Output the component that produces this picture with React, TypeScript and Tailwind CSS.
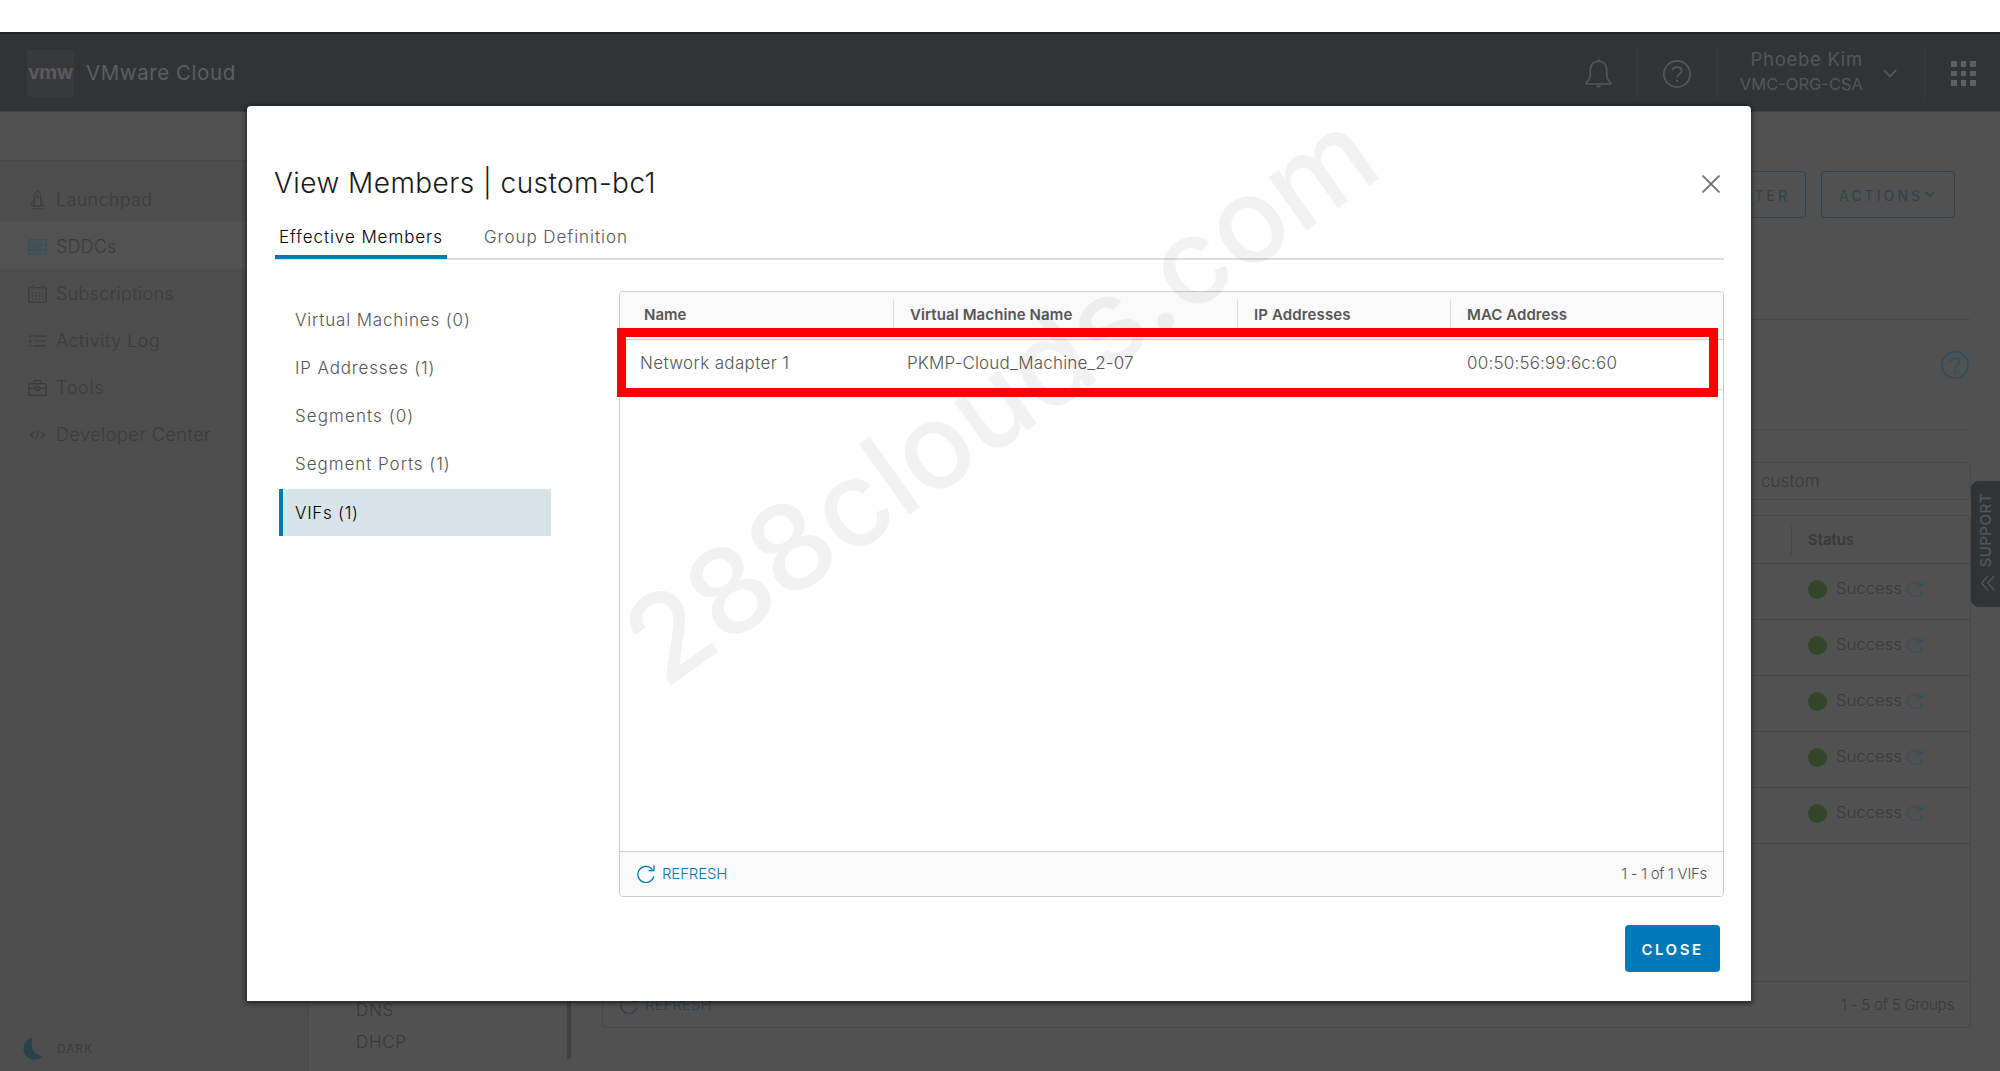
import React from 'react';

type IconProps = { className?: string };

const RefreshIcon = ({ className = '' }: IconProps) => (
  <svg className={className} viewBox="0 0 18 18" fill="none" stroke="currentColor" strokeWidth="1.3">
    <path d="M16.8 11.4A8.1 8.1 0 1 1 15.4 4.6" />
    <path d="M17 0.4V5.6H11.6" />
  </svg>
);

const HelpIcon = ({ className = '' }: IconProps) => (
  <svg className={className} viewBox="0 0 28 28" fill="none" stroke="currentColor" strokeWidth="1.7">
    <circle cx="14" cy="14" r="13.1" />
    <path d="M9.3 10.2C10.1 8.2 11.8 7.2 14 7.2c2.6 0 4.6 1.5 4.6 3.8 0 3.6-4.5 3-4.5 6.6" />
    <path d="M14.1 19.8v2" strokeWidth="1.9" />
  </svg>
);

const BellIcon = () => (
  <svg className="h-[29px] w-[27px]" viewBox="0 0 27 29" fill="none" stroke="currentColor" strokeWidth="1.6">
    <path d="M13.5 0.4v2" strokeWidth="2.2" />
    <path d="M13.5 2.2c-4.700 0-8.200 3.500-8.200 8.200v5.800c0 3-1 4.800-3.800 7.200-.8.800-.5 1.600.7 1.600h22.600c1.200 0 1.500-.8.7-1.600-2.800-2.400-3.800-4.200-3.800-7.200v-5.800c0-4.700-3.500-8.200-8.200-8.200z" />
    <path d="M11 26.400h5c-.3 1.400-1.200 2-2.500 2s-2.200-.6-2.500-2z" fill="currentColor" stroke="none" />
  </svg>
);

const RocketIcon = () => (
  <svg className="h-5 w-[19px]" viewBox="0 0 19 20" fill="none" stroke="currentColor" strokeWidth="1">
    <path d="M6.300 16V6.600C6.300 4 7.600 2 9.500.9c1.900 1.100 3.200 3.100 3.200 5.700V16zM6.300 10.200c-1.900 1.200-2.600 2.700-2.600 5.800h2.600M12.700 10.200c1.900 1.200 2.600 2.700 2.600 5.800h-2.600M3.700 18.800h11.600" />
    <circle cx="9.500" cy="6.500" r="1.200" />
  </svg>
);

const ServerIcon = () => (
  <svg className="h-4 w-[19px]" viewBox="0 0 19 16" fill="none" stroke="currentColor" strokeWidth="1.300">
    <rect x=".7" y=".7" width="17.600" height="14.600" rx="1" />
    <path d="M.7 5.500h17.600M.7 10.500h17.600M5.500 3.200h8M3 8h11M5.500 12.900h8" />
  </svg>
);

const CalendarIcon = () => (
  <svg className="h-[18px] w-[19px]" viewBox="0 0 19 18" fill="none" stroke="currentColor" strokeWidth="1.300">
    <path d="M3.500 2.600H2c-.8 0-1.300.5-1.300 1.300v12c0 .8.5 1.400 1.300 1.400h15c.8 0 1.300-.6 1.300-1.400v-12c0-.8-.5-1.300-1.300-1.300h-1.500M6.500 2.600h6M4.900.3v4M14.200.3v4" />
    <path d="M4 8.200h11.500M4 11h11.500M4 13.800h11.500" strokeDasharray="1.500 1.800" />
  </svg>
);

const ListIcon = () => (
  <svg className="h-3 w-[19px]" viewBox="0 0 19 12" fill="none" stroke="currentColor" strokeWidth="1.200">
    <path d="M5 1.200h13M5 6h13M5 10.800h13" />
    <path d="M1.200 1.200h2M1.200 6h2M1.200 10.800h2" strokeWidth="2" />
  </svg>
);

const ToolboxIcon = () => (
  <svg className="h-4 w-[19px]" viewBox="0 0 19 16" fill="none" stroke="currentColor" strokeWidth="1.300">
    <path d="M2 3.700h15l1.300 2v8.400c0 .7-.4 1.200-1.200 1.200H1.900c-.8 0-1.200-.5-1.200-1.200V5.700zM6 3.500V1.900C6 1.100 6.500.7 7.200.7h4.600c.7 0 1.200.4 1.200 1.200v1.600M.8 8.300h6.200M12 8.300h6.200" />
    <circle cx="9.500" cy="8.400" r="2" />
  </svg>
);

const CodeIcon = () => (
  <svg className="h-[10px] w-[19px]" viewBox="0 0 19 10" fill="none" stroke="currentColor" strokeWidth="1.200">
    <path d="M6.300 1.600 2.600 5l3.700 3.300M12.700 1.600 16.400 5l-3.700 3.300M10.800.5 8.200 9.500" />
  </svg>
);

const sideItems = [
  { label: 'Launchpad', icon: <RocketIcon />, cls: 'tracking-[0.3px]' },
  { label: 'SDDCs', icon: <ServerIcon />, cls: 'tracking-[0.15px]', active: true },
  { label: 'Subscriptions', icon: <CalendarIcon />, cls: 'tracking-[0.3px]' },
  { label: 'Activity Log', icon: <ListIcon />, cls: 'tracking-[0.5px]' },
  { label: 'Tools', icon: <ToolboxIcon />, cls: 'tracking-[0.7px]' },
  { label: 'Developer Center', icon: <CodeIcon />, cls: 'tracking-[0.5px]' },
];

const memberTypes = [
  { label: 'Virtual Machines (0)', cls: 'tracking-[0.84px]' },
  { label: 'IP Addresses (1)', cls: 'tracking-[0.84px]' },
  { label: 'Segments (0)', cls: 'tracking-[1.08px]' },
  { label: 'Segment Ports (1)', cls: 'tracking-[0.96px]' },
  { label: 'VIFs (1)', cls: 'tracking-[0.72px]', active: true },
];

function TopBar() {
  return (
    <header className="flex h-[80px] items-center border-t-2 border-[#232323] border-b border-b-[#3d4144] bg-[#313437] pl-[27px] pt-[2px] text-[#54575a]">
      <div className="flex h-[47px] w-[47px] items-center justify-center rounded-[3px] bg-[#37393b] pb-px text-[19.5px] font-bold leading-none tracking-[-0.4px] text-[#5a5a5a]">
        vmw
      </div>
      <div className="ml-3 text-[20.5px] tracking-[0.57px] text-[#5d5f61]">VMware Cloud</div>
      <div className="ml-auto flex h-full items-center">
        <div className="mr-[25px]"><BellIcon /></div>
        <div className="h-[52px] w-px bg-[#383a3c]" />
        <HelpIcon className="ml-[25px] mr-[26px] h-7 w-7" />
        <div className="h-[52px] w-px bg-[#383a3c]" />
        <div className="w-[145px] pb-[4px] text-right leading-[25px]">
          <div className="text-[18.5px] tracking-[0.7px]">Phoebe Kim</div>
          <div className="text-[16.5px] tracking-[0px]">VMC-ORG-CSA</div>
        </div>
        <svg className="ml-5 mb-px h-[9px] w-[14px]" viewBox="0 0 14 9" fill="none" stroke="currentColor" strokeWidth="1.700"><path d="M.7.8 7 7.400 13.300.8" /></svg>
        <div className="ml-[27px] h-[52px] w-px bg-[#383a3c]" />
        <div className="ml-[26px] mr-6 grid grid-cols-3 gap-1 text-[#5d5f61]">
          {Array.from({ length: 9 }, (_, i) => <i key={i} className="h-[5.700px] w-[5.700px] bg-current" />)}
        </div>
      </div>
    </header>
  );
}

function SideNav() {
  return (
    <aside className="flex w-[309px] flex-col border-r border-[#484848] bg-[#4d4d4d] text-[#3b3b3b]">
      <div className="h-[49px] border-b border-[#484848] bg-[#505050]" />
      <nav className="pt-[14px]">
        {sideItems.map((it) => (
          <div key={it.label} className={it.active ? 'flex h-[47px] items-center bg-[#525252] pl-7' : 'flex h-[47px] items-center pl-7'}>
            <span className={it.active ? 'mt-[3px] text-[#35505e]' : 'mt-[3px]'}>{it.icon}</span>
            <span className={'ml-[9px] pt-px text-[18px] font-light ' + it.cls}>{it.label}</span>
          </div>
        ))}
      </nav>
      <div className="mb-[11px] mt-auto flex items-center pl-[23px]">
        <svg className="h-[23px] w-5 text-[#2a414e]" viewBox="0 0 20 23" fill="currentColor"><path d="M9.800.4C3.900 1.800.5 6 .5 11.400.5 17.800 5.300 22.500 11.600 22.500c3.400 0 6.200-1.200 8-3.600C13 18 8.600 14.500 8.600 7.700c0-2.700.3-5 1.200-7.300z" /></svg>
        <span className="ml-[14px] text-[12px] tracking-[0.9px]">DARK</span>
      </div>
    </aside>
  );
}

function GroupsPanel() {
  return (
    <section className="w-[1369px]">
      <div className="flex h-[110px] items-center justify-end border-b border-[#484848] pb-5 pr-[2px]">
        <HelpIcon className="h-7 w-7 text-[#2f4d5d]" />
      </div>
      <div className="mt-8 flex h-[38px] items-center rounded-[6px] border border-[#484848] pl-[1158px] pt-px text-[17px] font-light tracking-[0.1px] text-[#3a3a3a]">
        custom
      </div>
      <div className="mt-[15px] flex h-[513px] flex-col rounded-[4px] border border-[#474747] text-[#3a3a3a]">
        <div className="flex h-[48px] items-center border-b border-[#454545] pl-[1188px] pt-px">
          <div className="h-[31px] w-px bg-[#484848]" />
          <div className="ml-4 text-[15px] font-semibold tracking-[-0.1px]">Status</div>
        </div>
        {[0, 1, 2, 3, 4].map((i) => (
          <div key={i} className="flex h-[56px] items-center border-b border-[#454545] pb-[5px] pl-[1205px]">
            <i className="h-[19px] w-[19px] rounded-full bg-[#34462a]" />
            <span className="-mt-px ml-[9px] w-[71px] text-[16.500px] font-light tracking-[0.1px]">Success</span>
            <RefreshIcon className="h-4 w-4 text-[#31505f]" />
          </div>
        ))}
        <div className="mt-auto flex h-[46px] items-center border-t border-[#454545] pl-[17px] pr-4">
          <RefreshIcon className="h-[18px] w-[18px] text-[#2a4350]" />
          <span className="ml-[7px] pt-px text-[15px] font-light text-[#2a4350]">REFRESH</span>
          <span className="ml-auto pt-px text-[15px] font-light tracking-[-0.2px]">1 - 5 of 5 Groups</span>
        </div>
      </div>
    </section>
  );
}

function BackgroundPage() {
  return (
    <div className="flex h-[959px] bg-[#515151]">
      <SideNav />
      <main className="flex flex-1 flex-col">
        <div className="mr-[30px] flex h-[208px] shrink-0 items-start justify-end gap-[15px] border-b border-[#484848] pr-[15px] pt-[59px] text-[14px] tracking-[2.900px] text-[#2b4350]">
          <button className="h-[47px] rounded-[4px] border border-[#2b4453] pl-5 pr-[15px] pt-[2px] tracking-[3.100px]">OPEN VCENTER</button>
          <button className="flex h-[47px] w-[134px] items-center rounded-[4px] border border-[#2b4453] pl-[17px] pt-[2px] tracking-[3.100px]">
            ACTIONS
            <svg className="ml-[2px] mt-[-3px] h-[6px] w-[10px]" viewBox="0 0 10 6" fill="none" stroke="currentColor" strokeWidth="1.500"><path d="M.6.700 5 5 9.400.700" /></svg>
          </button>
        </div>
        <div className="flex flex-1">
          <div className="flex w-[293px] justify-between pb-3 pl-[47px] pr-[31px]">
            <div className="mt-auto pb-px text-[17px] font-light leading-8 text-[#383838]">
              <div className="tracking-[0.700px]">DNS</div>
              <div className="tracking-[0.700px]">DHCP</div>
            </div>
            <div className="w-1 bg-[#404040]" />
          </div>
          <GroupsPanel />
        </div>
      </main>
    </div>
  );
}

function MembersTable() {
  return (
    <div className="mt-[31px] flex h-[606px] w-[1105px] flex-col rounded-[4px] border border-[#ccc] bg-white text-[#565656]">
      <div className="flex h-12 shrink-0 items-center rounded-t-[3px] border-b border-[#ccc] bg-[#fafafa] text-[15px] font-semibold">
        <div className="w-[273px] pl-6">Name</div>
        <div className="h-[31px] w-px bg-[#ddd]" />
        <div className="w-[343px] pl-4 tracking-[0.100px]">Virtual Machine Name</div>
        <div className="h-[31px] w-px bg-[#ddd]" />
        <div className="w-[212px] pl-4 tracking-[0.130px]">IP Addresses</div>
        <div className="h-[31px] w-px bg-[#ddd]" />
        <div className="pl-4 tracking-[0.060px]">MAC Address</div>
      </div>
      <div className="flex h-[50px] shrink-0 items-center border-b border-[#ddd] pb-[2px] text-[17px] font-light">
        <div className="w-[287px] pl-5 tracking-[0.350px]">Network adapter 1</div>
        <div className="w-[560px] tracking-[0.170px]">PKMP-Cloud_Machine_2-07</div>
        <div className="tracking-[0.200px]">00:50:56:99:6c:60</div>
      </div>
      <div className="mt-auto flex h-[45px] items-center rounded-b-[3px] border-t border-[#ccc] bg-[#fafafa] pl-[17px] pr-4 text-[15px]">
        <RefreshIcon className="h-[18px] w-[18px] text-[#0079b8]" />
        <span className="ml-[7px] font-light tracking-[-0.150px] text-[#0079b8]">REFRESH</span>
        <span className="ml-auto font-light tracking-[-0.300px]">1 - 1 of 1 VIFs</span>
      </div>
    </div>
  );
}

function MembersDialog() {
  return (
    <div className="absolute left-[247px] top-[106px] flex h-[895px] w-[1504px] flex-col rounded-t-[4px] bg-white pl-7 pr-[27px] pt-14 shadow-[0_1px_5px_1px_rgba(0,0,0,0.6)]">
      <div className="flex h-10 items-center justify-between pr-1 pt-px">
        <h1 className="-ml-px text-[28px] font-light tracking-[0.450px] text-[#1a1a1a]">View Members | custom-bc1</h1>
        <svg className="mt-[2px] h-[18px] w-[18px]" viewBox="0 0 18 18" stroke="#707070" strokeWidth="1.800"><path d="M.5.500l17 17M17.500.500l-17 17" /></svg>
      </div>
      <div className="mt-3 flex h-[46px] items-start border-b-2 border-[#dcdcdc] text-[17px] font-light">
        <div className="h-[45px] w-[172px] border-b-4 border-[#0079b8] pl-1 leading-[46px] tracking-[0.930px] text-black">Effective Members</div>
        <div className="ml-[37px] leading-[46px] tracking-[0.960px] text-[#565656]">Group Definition</div>
      </div>
      <div className="flex">
        <div className="ml-1 mr-[68px] flex w-[272px] flex-col gap-[1.200px] pt-9 text-[17px] font-light text-[#565656]">
          {memberTypes.map((m) => (
            <div
              key={m.label}
              className={(m.active ? 'border-[#0079b8] bg-[#d9e4ea] text-black ' : 'border-transparent ') + 'flex h-[47px] items-center border-l-4 pl-3 pt-[2px] ' + m.cls}
            >
              {m.label}
            </div>
          ))}
        </div>
        <MembersTable />
      </div>
      <button className="ml-auto mr-1 mt-7 flex h-[47px] w-[95px] items-center justify-center rounded-[4px] bg-[#0079b8] pt-[3px] text-[15px] font-semibold tracking-[2.500px] text-white">
        CLOSE
      </button>
    </div>
  );
}

export default function App() {
  return (
    <div className="relative h-[1071px] w-[2000px] overflow-hidden whitespace-nowrap bg-white pt-8 font-['Inter','Liberation_Sans',sans-serif]">
      <TopBar />
      <BackgroundPage />
      <div className="absolute right-0 top-[481px] flex h-[126px] w-[29px] flex-col items-center rounded-l-[8px] bg-[#303437] pt-[12px] text-[#54575a]">
        <span className="rotate-180 text-[15px] font-medium leading-7 tracking-[0.500px] [writing-mode:vertical-rl]">SUPPORT</span>
        <svg className="ml-1 mt-[7px] h-4 w-[14px]" viewBox="0 0 14 16" fill="none" stroke="currentColor" strokeWidth="1.300"><path d="M7 .700.800 8 7 15.300M13.300.700 7 8l6.300 7.300" /></svg>
      </div>
      <MembersDialog />
      <div className="pointer-events-none absolute left-[665px] top-[587px] origin-[0_104px] rotate-[-35.6deg] text-[120px] font-medium leading-[120px] tracking-[-0.400px] text-black/5">
        288clouds.com
      </div>
      <div className="pointer-events-none absolute left-[617px] top-[328px] h-[69px] w-[1101px] border-[9px] border-[#ff0000]" />
    </div>
  );
}
